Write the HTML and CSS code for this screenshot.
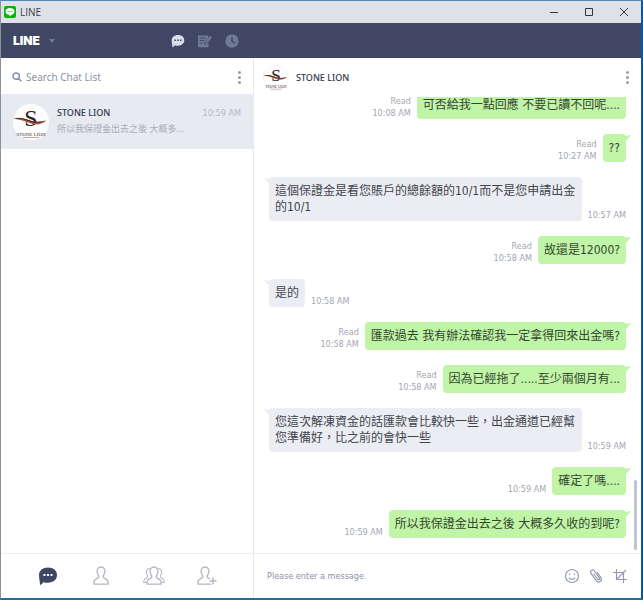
FILE: index.html
```html
<!DOCTYPE html>
<html lang="zh-Hant">
<head>
<meta charset="utf-8">
<title>LINE</title>
<link rel="stylesheet" href="styles.css">
</head>
<body>
<svg class="defs" aria-hidden="true">
  <symbol id="swoosh" viewBox="0 0 36 36">
    <path d="M0 15c5-2.500 11-.5 17 1.800 5 1.800 10 1.200 16-.3-3 3.500-9 5-15 3-6-2-11-4.500-18-4.500z" fill="#b05a48"/>
    <path d="M2 14.500c6-1.500 11 .5 16 2.300 5 1.700 10 1.200 15-.3-5 2.500-10 3-15 1.500-5-1.800-10-3.500-16-3.500z" fill="#3a2527"/>
    <path d="M10 33.500h16" stroke="#c9a29b" stroke-width="1"/>
  </symbol>
  <symbol id="person" viewBox="0 0 16 20">
    <path d="M8 1C5.200 1 3.900 3 4.100 5.600c.2 2.300 1.200 3.400 1.600 4.300.3 1.500-.5 2.300-2.200 3C1.600 13.700.9 14.600.9 17v1.200h14.200V17c0-2.400-.7-3.300-2.600-4.100-1.700-.7-2.500-1.500-2.200-3 .4-.9 1.400-2 1.600-4.300C12.100 3 10.800 1 8 1z" fill="#fff" stroke="currentColor" stroke-width="1.300"/>
  </symbol>
  <symbol id="bubble" viewBox="0 0 20 20">
    <path d="M10 1.500c5.200 0 9 3 9 7.600s-3.800 7.600-9 7.600c-1.700 0-3.200-.2-4.500-.8-.8 1.200-1.900 2.500-3.500 3.100.3-1.700-1-5.600-1-9.900C1 4.500 4.800 1.500 10 1.500z" fill="currentColor"/>
  </symbol>
</svg>

<div class="window">
  <header class="titlebar">
    <svg class="app-icon" viewBox="0 0 12 12" aria-hidden="true">
      <rect width="12" height="12" rx="2" fill="#08b40b"/>
      <path d="M6 2C3.300 2 1.500 3.500 1.500 5.400c0 1.800 1.500 3 3.700 3.300.4.1.4.500.3 1.500C8 9 10.500 7.500 10.500 5.400 10.500 3.500 8.700 2 6 2z" fill="#fff"/>
      <path d="M3.500 5.500h1.200M5.500 5.500h1M7.400 5.500h1.100" stroke="#08b40b" stroke-width=".9"/>
    </svg>
    <span class="app-title">LINE</span>
    <div class="window-controls">
      <button aria-label="Minimize"><svg viewBox="0 0 10 10"><path d="M1 5.500h8"/></svg></button>
      <button aria-label="Maximize"><svg viewBox="0 0 10 10"><path d="M1.500 1.500h7v7h-7z"/></svg></button>
      <button aria-label="Close"><svg viewBox="0 0 10 10"><path d="M1 1l8 8M9 1L1 9"/></svg></button>
    </div>
  </header>

  <nav class="topbar">
    <button class="brand">LINE<span class="caret"></span></button>
    <div class="topbar-icons">
      <button class="active" aria-label="Chats"><svg viewBox="0 0 20 20"><use href="#bubble"/><path d="M5 9h2.200M9 9h2.200M13 9h2.200" stroke="#404764" stroke-width="2"/></svg></button>
      <button aria-label="Notes"><svg viewBox="0 0 20 20"><path d="M0 2h15v3l-6 7v3h3l3-3v7H0z" fill="currentColor"/><path d="M2.500 6h9M2.500 9.500h6M2.500 13h4" stroke="#404764" stroke-width="1.400"/><path d="M10 14.500l.6-3L17.500 3 20 5l-7.400 8.500z" fill="currentColor"/></svg></button>
      <button aria-label="History"><svg viewBox="0 0 20 20"><circle cx="10" cy="10" r="9.500" fill="currentColor"/><path d="M10 4.500v6l4 2.500" fill="none" stroke="#404764" stroke-width="2"/></svg></button>
    </div>
  </nav>

  <div class="content">
    <aside class="sidebar">
      <div class="search">
        <label for="search" aria-label="Search"><svg viewBox="0 0 12 12"><circle cx="5" cy="5" r="3.800"/><path d="M7.800 7.800l3.400 3.400"/></svg></label>
        <input id="search" type="text" placeholder="Search Chat List">
        <button class="more" aria-label="Chat list options"><i></i><i></i><i></i></button>
      </div>
      <a class="chat-item" href="#chat">
        <svg class="avatar-large" viewBox="0 0 36 36">
          <circle cx="18" cy="18" r="18" fill="#fdfdfd"/>
          <text x="18" y="22" class="logo-s" text-anchor="middle">S</text>
          <use href="#swoosh"/>
          <text x="18" y="32" class="logo-name" text-anchor="middle">STONE LION</text>
        </svg>
        <div class="chat-summary">
          <div class="chat-line"><strong>STONE LION</strong><time>10:59 AM</time></div>
          <p>所以我保證金出去之後 大概多...</p>
        </div>
      </a>
      <div class="tabs">
        <button class="active" aria-label="Chats"><svg viewBox="0 0 20 20"><use href="#bubble"/><path d="M5.500 9h2M9 9h2M12.500 9h2" stroke="#fff" stroke-width="2"/></svg></button>
        <button aria-label="Friends"><svg viewBox="0 0 22 20"><use href="#person" x="3" width="16" height="20"/></svg></button>
        <button aria-label="Groups"><svg viewBox="0 0 22 20"><use href="#person" x="0" y="2" width="13" height="16"/><use href="#person" x="9" y="2" width="13" height="16"/><use href="#person" x="3" width="16" height="20"/></svg></button>
        <button aria-label="Add friend"><svg viewBox="0 0 22 20"><use href="#person" x="1" width="16" height="20"/><path d="M17 10v10M12 15h10" stroke="#fff" stroke-width="4"/><path d="M17 11.500v7M13.500 15h7" stroke="currentColor" stroke-width="1.500"/></svg></button>
      </div>
    </aside>

    <main class="chat" id="chat">
      <header class="chat-header">
        <svg class="avatar-small" viewBox="0 0 36 36">
          <circle cx="18" cy="18" r="17.500" fill="#fdfdfd" stroke="#efeff2"/>
          <text x="18" y="22" class="logo-s" text-anchor="middle">S</text>
          <use href="#swoosh"/>
          <text x="18" y="32" class="logo-name" text-anchor="middle">STONE LION</text>
        </svg>
        <h1>STONE LION</h1>
        <button class="more" aria-label="Chat options"><i></i><i></i><i></i></button>
      </header>

      <section class="messages">
        <div class="message sent"><p class="text">可否給我一點回應 不要已讀不回呢....</p><div class="meta"><span>Read</span><time>10:08 AM</time></div></div>
        <div class="message sent"><p class="text">??</p><div class="meta"><span>Read</span><time>10:27 AM</time></div></div>
        <div class="message"><p class="text">這個保證金是看您賬戶的總餘額的10/1而不是您申請出金的10/1</p><div class="meta"><time>10:57 AM</time></div></div>
        <div class="message sent"><p class="text">故還是12000?</p><div class="meta"><span>Read</span><time>10:58 AM</time></div></div>
        <div class="message"><p class="text">是的</p><div class="meta"><time>10:58 AM</time></div></div>
        <div class="message sent"><p class="text">匯款過去 我有辦法確認我一定拿得回來出金嗎?</p><div class="meta"><span>Read</span><time>10:58 AM</time></div></div>
        <div class="message sent"><p class="text">因為已經拖了.....至少兩個月有...</p><div class="meta"><span>Read</span><time>10:58 AM</time></div></div>
        <div class="message"><p class="text">您這次解凍資金的話匯款會比較快一些，出金通道已經幫您準備好，比之前的會快一些</p><div class="meta"><time>10:59 AM</time></div></div>
        <div class="message sent"><p class="text">確定了嗎....</p><div class="meta"><time>10:59 AM</time></div></div>
        <div class="message sent"><p class="text">所以我保證金出去之後 大概多久收的到呢?</p><div class="meta"><time>10:59 AM</time></div></div>
        <div class="scroll-thumb"></div>
      </section>

      <form class="composer">
        <input type="text" aria-label="Message" placeholder="Please enter a message.">
        <button type="button" aria-label="Emoji"><svg viewBox="0 0 16 16"><circle cx="8" cy="8" r="6.500"/><path d="M5 9.500c1.200 2.500 4.800 2.500 6 0M5.700 5.500v1.500M10.300 5.500v1.500"/></svg></button>
        <button type="button" aria-label="Attach file"><svg viewBox="0 0 16 16"><path d="M5.500 5.500l4 5.500c1.200 1.400 2.700.2 1.800-1.200L6.500 3C4.800.8 1.500 2.800 3 5.300l5.200 7.400c2.300 3 6.700.3 4.700-3L9 4"/></svg></button>
        <button type="button" aria-label="Capture screen"><svg viewBox="0 0 16 16"><path d="M4.500 1v10.500H15M1 4.500h10.500V15M14 2L4.500 11.500"/></svg></button>
      </form>
    </main>
  </div>
</div>
</body>
</html>
```
FILE: styles.css
```css
* {
  box-sizing: border-box;
}

body {
  margin: 0;
  font-family: "DejaVu Sans Condensed", "Noto Sans", "Noto Sans CJK TC", sans-serif;
  font-size: 9px;
  line-height: 12px;
  color: #a3a6b1;
}

button {
  padding: 0;
  border: 0;
  background: none;
  color: inherit;
  font: inherit;
}

svg {
  display: block;
}

p,
h1 {
  margin: 0;
}

input {
  flex: 1;
  min-width: 0;
  padding: 0;
  border: 0;
  outline: 0;
  background: none;
  font: inherit;
}

.defs {
  position: absolute;
  width: 0;
  height: 0;
}

.window {
  display: flex;
  flex-direction: column;
  height: 100vh;
  border: 1px solid #4f87b9;
  border-left-color: #8b9299;
  border-right: 2px solid #145496;
  border-bottom: 2px solid #226e99;
  background: #fff;
}

.titlebar {
  display: flex;
  align-items: center;
  height: 22px;
  padding: 0 12px 0 3px;
  background: #dee1e6;
  color: #3c3e44;
}

.app-icon {
  width: 12px;
  height: 12px;
  margin-right: 4px;
}

.app-title {
  font-family: "Open Sans", sans-serif;
  font-size: 10px;
}

.window-controls {
  display: flex;
  gap: 25px;
  margin-left: auto;
}

.window-controls svg {
  width: 10px;
  height: 10px;
  fill: none;
  stroke: #33353a;
  stroke-width: 1;
}

.topbar {
  display: flex;
  align-items: center;
  height: 35px;
  background: #404764;
}

.brand {
  display: flex;
  align-items: center;
  gap: 9px;
  padding-left: 12px;
  color: #fff;
  font-family: Inter, sans-serif;
  font-size: 12px;
  font-weight: 900;
}

.caret {
  border: 3px solid transparent;
  border-top: 4px solid #737a94;
  border-bottom: 0;
}

.topbar-icons {
  display: flex;
  gap: 13px;
  margin-left: 116px;
  color: #707a96;
}

.topbar-icons svg {
  width: 14px;
  height: 14px;
}

.topbar-icons .active {
  color: #d9deeb;
}

.content {
  display: flex;
  flex: 1;
  min-height: 0;
}

.sidebar {
  display: flex;
  flex: 0 0 253px;
  flex-direction: column;
  border-right: 1px solid #e9eaf0;
}

.search {
  display: flex;
  align-items: center;
  gap: 4px;
  height: 36px;
  padding: 2px 12px 0 11px;
}

.search svg {
  width: 10px;
  height: 10px;
  fill: none;
  stroke: #858da3;
  stroke-width: 1.8;
}

.search input {
  font-family: "Noto Sans", sans-serif;
  font-size: 10px;
}

input::placeholder {
  color: #8d92a3;
  opacity: 1;
}

.more {
  display: grid;
  gap: 2px;
}

.more i {
  width: 3px;
  height: 3px;
  border-radius: 50%;
  background: #969cae;
}

.chat-item {
  display: flex;
  align-items: center;
  gap: 8px;
  height: 55px;
  padding: 0 12px;
  background: #e7eaf1;
  color: #a9adb8;
  text-decoration: none;
}

.avatar-large {
  width: 36px;
  height: 36px;
}

.avatar-large,
.avatar-small {
  overflow: visible;
}

.logo-s {
  fill: #2d2326;
  font: 24px "Liberation Serif", serif;
}

.logo-name {
  fill: #3b3437;
  font: 5px "Liberation Serif", serif;
}

.chat-summary {
  flex: 1;
}

.chat-line {
  display: flex;
  justify-content: space-between;
}

.chat-line time {
  color: #b5b9c4;
}

.chat-line strong,
.chat-header h1 {
  color: #30364d;
  font-family: "Noto Sans", sans-serif;
  font-size: 9px;
  font-weight: 500;
}

.chat-summary p {
  margin-top: 2px;
  line-height: 16px;
}

.tabs {
  display: flex;
  justify-content: space-between;
  align-items: center;
  height: 45px;
  margin-top: auto;
  padding: 0 35px 0 36px;
  border-top: 1px solid #eceef3;
  color: #b3b7c4;
}

.tabs svg {
  width: 22px;
  height: 20px;
}

.tabs .active {
  color: #404764;
}

.chat {
  display: flex;
  flex: 1;
  flex-direction: column;
  min-width: 0;
}

.chat-header {
  display: flex;
  flex: none;
  align-items: center;
  gap: 7px;
  height: 39px;
  padding: 0 12px 0 9px;
}

.chat-header .more {
  margin-left: auto;
}

.avatar-small {
  width: 26px;
  height: 26px;
}

.messages {
  position: relative;
  display: flex;
  flex: 1;
  flex-direction: column;
  justify-content: flex-end;
  gap: 15px;
  min-height: 0;
  padding: 0 15px 15px;
  overflow: hidden;
}

.message {
  display: flex;
  flex: none;
  align-items: flex-end;
  gap: 6px;
}

.sent {
  flex-direction: row-reverse;
}

.text {
  position: relative;
  max-width: 313px;
  padding: 6px;
  border-radius: 4px;
  background: #ecedf3;
  color: #41444c;
  font-size: 12px;
  line-height: 16px;
}

.sent .text {
  background: #c0f4a7;
  color: #34472d;
}

.text::before {
  content: "";
  position: absolute;
  top: 1px;
  left: -5px;
  width: 8px;
  height: 5px;
  background: inherit;
  clip-path: polygon(0 0, 100% 20%, 100% 100%, 50% 100%);
}

.sent .text::before {
  right: -5px;
  left: auto;
  clip-path: polygon(100% 0, 0 20%, 0 100%, 50% 100%);
}

.meta {
  display: grid;
  text-align: right;
  white-space: nowrap;
}

.scroll-thumb {
  position: absolute;
  right: 4px;
  bottom: 3px;
  width: 3px;
  height: 70px;
  border-radius: 2px;
  background: #c0c3d0;
}

.composer {
  display: flex;
  flex: none;
  align-items: center;
  gap: 8px;
  height: 45px;
  padding: 0 13px;
  border-top: 1px solid #eceef3;
}

.composer svg {
  width: 16px;
  height: 16px;
  fill: none;
  stroke: #949aac;
  stroke-width: 1.2;
}
```
